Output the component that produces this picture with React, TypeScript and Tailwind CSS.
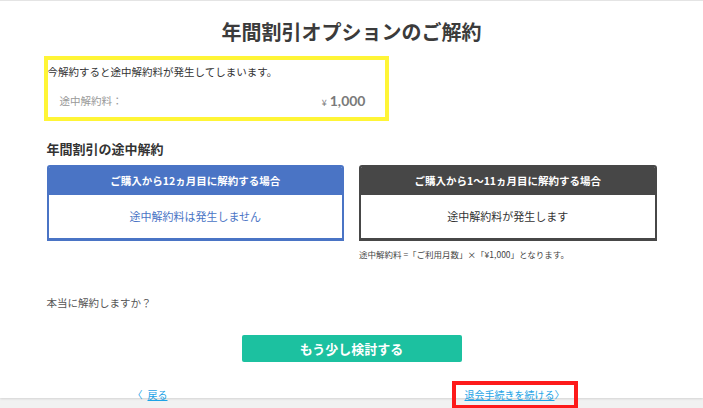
import React from "react";

export default function App() {
  const jp = { fontFamily: '"Noto Sans CJK JP", "Noto Sans", sans-serif' };
  return (
    <div className="min-h-screen w-full bg-[#f1f1f1]" style={jp}>
      <div className="h-[398px] w-full bg-white border-t border-[#e4e4e4] shadow-[0_1px_2px_rgba(0,0,0,0.12)]">
        <div className="mx-auto w-[610px]">
          <h1 className="pt-[19px] text-center text-[20px] leading-[24px] font-bold text-[#3b3b3b]">
            年間割引オプションのご解約
          </h1>

          <div className="mt-[12px] ml-[-3px] w-[345px] border-4 border-[#fff536]">
            <p className="pt-[4px] text-[10.5px] leading-[16px] text-[#333]">
              今解約すると途中解約料が発生してしまいます。
            </p>
            <div className="mt-[12px] flex items-center justify-between pl-[12px] pr-[19px] pb-[7px] h-[18px] box-content">
              <span className="text-[10.5px] leading-[18px] text-[#999]">途中解約料：</span>
              <span className="leading-[18px] font-bold text-[#7a7a7a]">
                <span className="text-[9px] font-normal mr-[3px]">¥</span>
                <span className="text-[14px]" style={{ fontFamily: 'Lato, "Noto Sans", sans-serif' }}>1,000</span>
              </span>
            </div>
          </div>

          <h2 className="mt-[19px] text-[13px] leading-[18px] font-bold text-[#333]">
            年間割引の途中解約
          </h2>

          <div className="mt-[7px] grid grid-cols-2 gap-[15px]">
            <div>
              <div className="overflow-hidden rounded-t-[3px] border-2 border-b-[3px] border-[#4a74c5]">
                <div className="flex h-[28px] items-center justify-center bg-[#4a74c5] text-[10.5px] font-bold text-white">
                  ご購入から12ヵ月目に解約する場合
                </div>
                <div className="flex h-[43px] items-center justify-center bg-white text-[11px] text-[#4a74c5]">
                  途中解約料は発生しません
                </div>
              </div>
            </div>
            <div>
              <div className="overflow-hidden rounded-t-[3px] border-2 border-b-[3px] border-[#474747]">
                <div className="flex h-[28px] items-center justify-center bg-[#474747] text-[10.5px] font-bold text-white">
                  ご購入から1〜11ヵ月目に解約する場合
                </div>
                <div className="flex h-[43px] items-center justify-center bg-white text-[11px] text-[#333]">
                  途中解約料が発生します
                </div>
              </div>
              <p className="mt-[7px] text-[8.5px] leading-[12px] text-[#444]">
                途中解約料 =「ご利用月数」×「¥1,000」となります。
              </p>
            </div>
          </div>

          <p className="mt-[35px] text-[10.5px] leading-[16px] text-[#555]">本当に解約しますか？</p>

          <div className="mt-[24px] flex justify-center">
            <button className="h-[27px] w-[220px] rounded-[2px] bg-[#1cc1a0] text-[13px] font-bold text-white">
              もう少し検討する
            </button>
          </div>

          <div className="mt-[19px] flex items-center justify-between pl-[86px] pr-[79px] text-[10px] leading-[14px]">
            <a className="block text-[#1ea3e6]">
              <span className="mr-[5px]">〈</span>
              <span className="underline">戻る</span>
            </a>
            <div className="border-4 border-[#fd1a1a] pl-[9px] pr-[9px] py-[3px]">
              <a className="block text-[#1ea3e6]">
                <span className="underline">退会手続きを続ける</span>
                <span>〉</span>
              </a>
            </div>
          </div>
        </div>
      </div>
    </div>
  );
}
